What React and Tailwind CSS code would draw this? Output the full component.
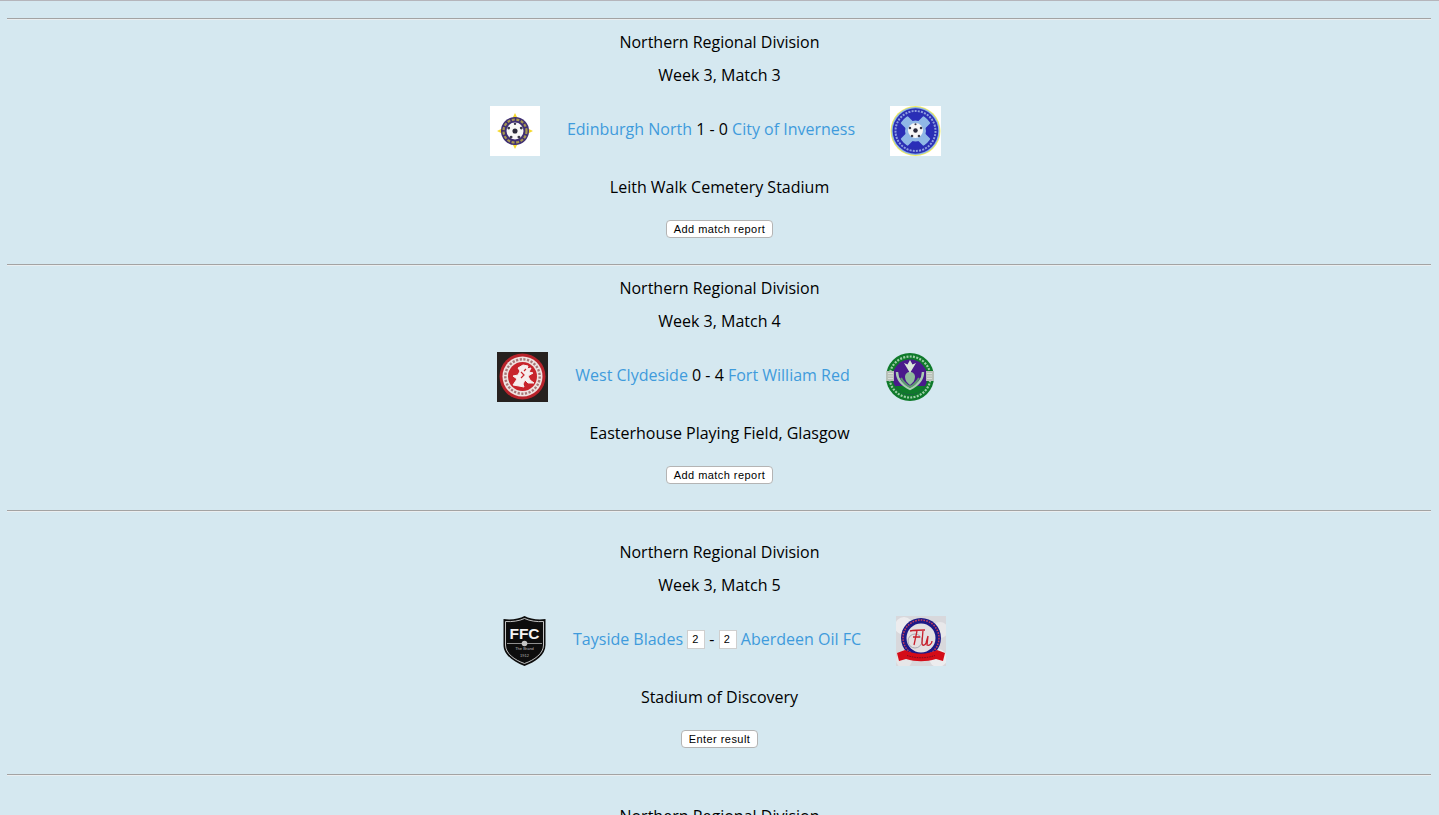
import React from "react";

function Ball({ cx, cy, r }) {
  return (
    <g>
      <circle cx={cx} cy={cy} r={r} fill="#f7f7f7" />
      <circle cx={cx} cy={cy} r={r * 0.3} fill="#2a2a3a" />
      <circle cx={cx - r * 0.74} cy={cy - r * 0.34} r={r * 0.17} fill="#3a3a4a" />
      <circle cx={cx + r * 0.74} cy={cy - r * 0.34} r={r * 0.17} fill="#3a3a4a" />
      <circle cx={cx - r * 0.46} cy={cy + r * 0.72} r={r * 0.17} fill="#3a3a4a" />
      <circle cx={cx + r * 0.46} cy={cy + r * 0.72} r={r * 0.17} fill="#3a3a4a" />
      <circle cx={cx} cy={cy - r * 0.84} r={r * 0.14} fill="#3a3a4a" />
    </g>
  );
}

function EdinburghLogo() {
  return (
    <svg width="50" height="50" viewBox="0 0 50 50" className="block">
      <rect width="50" height="50" fill="#fff" />
      <path d="M25 7l3.500 7h-7zM25 43l3.500-7h-7zM7 25l7-3.500v7zM43 25l-7-3.500v7z" fill="#f5d92e" />
      <circle cx="25" cy="25" r="14" fill="#3f2f72" />
      <circle cx="25" cy="25" r="11.5" fill="none" stroke="#a8994f" strokeWidth="2.2" strokeDasharray="3 1.6" />
      <Ball cx={25} cy={25} r={8.5} />
    </svg>
  );
}

function InvernessLogo() {
  return (
    <svg width="51" height="50" viewBox="0 0 51 50" className="block">
      <rect width="51" height="50" fill="#fff" />
      <circle cx="25.5" cy="25" r="25" fill="#f2ee5c" />
      <circle cx="25.5" cy="25" r="24" fill="#8fb6e4" />
      <circle cx="25.5" cy="25" r="22.8" fill="#2b2fb4" />
      <circle cx="25.5" cy="25" r="20" fill="none" stroke="#8f9fe0" strokeWidth="2" strokeDasharray="2 1.2" />
      <circle cx="25.5" cy="25" r="17.5" fill="#2a2eb8" />
      <path d="M13.500 13l24 24M37.500 13l-24 24" stroke="#90b8e6" strokeWidth="10" />
      <circle cx="25.5" cy="25" r="17.500" fill="none" stroke="#2b2fb4" strokeWidth="1.500" />
      <circle cx="25.5" cy="25" r="10.500" fill="#90b8e6" />
      <Ball cx={25.5} cy={24.5} r={7.5} />
    </svg>
  );
}

function ClydesideLogo() {
  return (
    <svg width="51" height="50" viewBox="0 0 51 50" className="block">
      <rect width="51" height="50" fill="#26211f" />
      <circle cx="25.5" cy="24.5" r="23" fill="#b8232b" />
      <circle cx="25.5" cy="24.5" r="20" fill="#efe3e1" />
      <circle cx="25.5" cy="24.5" r="17.2" fill="none" stroke="#a87878" strokeWidth="2.400" strokeDasharray="2.200 1.500" />
      <circle cx="25.5" cy="24.5" r="14.5" fill="#c8242c" />
      <path
        d="M16 33l4-6-4-3 5-1 2-4-2-3 5-3 5 1-1 3 4-1-2 4 4 1-5 3 2 4 4 3-6 0-3-3-2 4 1 3-5-1z"
        fill="#f6eeee"
        stroke="#f6eeee"
        strokeLinejoin="round"
      />
      <path d="M24 20l3 3-3 3M29 17l-2 2" fill="none" stroke="#c8242c" strokeWidth="1.200" />
    </svg>
  );
}

function FortWilliamLogo() {
  return (
    <svg width="50" height="50" viewBox="0 0 50 50" className="block">
      <circle cx="25" cy="25" r="24" fill="#0f7a2b" />
      <circle cx="25" cy="25" r="20.5" fill="none" stroke="#9fcfa8" strokeWidth="2.200" strokeDasharray="2 1.300" />
      <circle cx="25" cy="25" r="17.500" fill="#4a1a8c" />
      <path d="M10 34a17.500 17.500 0 0 0 30 0z" fill="#0f7a2b" />
      <path d="M1 19h8v10H1zM41 19h8v10h-8z" fill="#b8c0b8" />
      <path d="M3 21.500h5M3 24h5M3 26.500h5M42 21.500h5M42 24h5M42 26.500h5" stroke="#dfe4df" strokeWidth="0.800" />
      <path d="M12 20c0 7 5 13 13 17 8-4 13-10 13-17" fill="none" stroke="#a9cdb2" strokeWidth="2.400" />
      <path d="M16 26c2 4 5 7 9 9 4-2 7-5 9-9" fill="none" stroke="#5f9a70" strokeWidth="2" />
      <path d="M20 25c0-3 2-5 5-5s5 2 5 5c0 3-2 6-5 8-3-2-5-5-5-8z" fill="#8fbd9b" />
      <path d="M25 21l-6-10 3.500 1.500L25 8l2.500 4.500L31 11z" fill="#dbe8db" />
    </svg>
  );
}

function FfcLogo() {
  return (
    <svg width="43" height="50" viewBox="0 0 43 50" className="block">
      <path d="M21.5 0C16 3 8 4 .5 3v26c0 10 10 17 21 21C32.500 46 42.500 39 42.500 29V3c-7.500 1-15.500 0-21-3z" fill="#0d0d0d" />
      <path d="M21.5 2.500C16 5 9 6 2.500 5.500V29c0 8.500 9 15 19 18.500C31.500 44 40.500 37.500 40.500 29V5.500c-6.500 .5-13.500-.5-19-3z" fill="none" stroke="#d8d8d8" strokeWidth="0.900" />
      <text x="21.500" y="23" textAnchor="middle" fontFamily="'Liberation Sans', sans-serif" fontWeight="700" fontSize="15.500" fill="#f4f4f4">
        FFC
      </text>
      <path d="M4 27.500h35" stroke="#8f8f8f" strokeWidth="1" />
      <circle cx="21.500" cy="27.500" r="2.800" fill="#c4c4c4" />
      <text x="21.500" y="34" textAnchor="middle" fontFamily="'Liberation Sans', sans-serif" fontSize="4" fill="#b8b8b8">
        The Brand
      </text>
      <text x="21.500" y="41" textAnchor="middle" fontFamily="'Liberation Sans', sans-serif" fontSize="4" fill="#b8b8b8">
        1912
      </text>
    </svg>
  );
}

function AberdeenLogo() {
  return (
    <svg width="50" height="50" viewBox="0 0 50 50" className="block">
      <rect width="50" height="50" fill="#d8d8dc" />
      <circle cx="8" cy="10" r="9" fill="#ececee" />
      <circle cx="44" cy="14" r="8" fill="#e8e8ea" />
      <circle cx="42" cy="42" r="9" fill="#ececee" />
      <circle cx="8" cy="44" r="8" fill="#e6e6e8" />
      <circle cx="25" cy="22" r="20" fill="#1d1a86" />
      <circle cx="25" cy="22" r="18" fill="none" stroke="#c8405c" strokeWidth="1.500" strokeDasharray="1.600 1.200" />
      <circle cx="25" cy="22" r="14.500" fill="#e4e0e2" />
      <circle cx="19" cy="25" r="7" fill="none" stroke="#a8a8b0" strokeWidth="1" />
      <path d="M14 15c5-1 10-1 15-1M21 15l-3 14M17 21h7M27 14l-1 13c0 3 3 3 4 0l2-7M32 20l-1 9c2 1 5-1 5-4" fill="none" stroke="#c8202c" strokeWidth="1.300" />
      <path d="M1 37l8-3c10 5 22 5 32 0l8 3-2 8-7-2c-10 3-20 3-30 0l-7 2z" fill="#d40c18" />
      <path d="M11 39.500c9 3 19 3 28 0" fill="none" stroke="#7c0a22" strokeWidth="1" strokeDasharray="1.500 1" />
    </svg>
  );
}

function Match({ pad, rowClass, week, home, away, venue, homeLogo, awayLogo, score, button }) {
  return (
    <>
      <hr className="ml-[7px] mr-[8px] border-0 border-t border-b border-t-[#a3a3a3] border-b-[#eaeef0]" />
      <div className={`flex flex-col items-center ${pad}`}>
        <p className="leading-[22px]">Northern Regional Division</p>
        <p className="mt-[11px] leading-[22px]">Week 3, Match {week}</p>
        <div className={`mt-[20px] flex w-full items-center justify-center ${rowClass}`}>
          {homeLogo}
          <div className="mb-[4px] ml-[27px] mr-[35px] flex items-center leading-[22px] whitespace-pre">
            <a href="#" className="text-[#3f9bdc]">{home}</a>
            {score}
            <a href="#" className="text-[#3f9bdc]">{away}</a>
          </div>
          {awayLogo}
        </div>
        <p className="mt-[20px] leading-[22px]">{venue}</p>
        <button className="mt-[22px] mb-[26px] h-[18px] rounded-[4px] border border-[#b4b4b4] bg-white px-[7px] font-['Liberation_Sans',sans-serif] text-[11px] leading-[16px] tracking-[0.45px] text-black">
          {button}
        </button>
      </div>
    </>
  );
}

function ScoreInput({ value }) {
  return (
    <input
      readOnly
      value={value}
      className="h-[19px] w-[18px] border border-[#cfcfcf] bg-white pl-[4px] font-['Liberation_Sans',sans-serif] text-[11px] text-black"
    />
  );
}

export default function App() {
  return (
    <div className="h-screen overflow-hidden border-t border-t-[#b5b5bb] bg-[#d5e8f0] pt-[17px] font-['Open_Sans',sans-serif] text-base text-black">
      <Match
        pad="pt-[11px]"
        rowClass="pr-[8px]"
        week={3}
        home="Edinburgh North"
        away="City of Inverness"
        venue="Leith Walk Cemetery Stadium"
        homeLogo={<EdinburghLogo />}
        awayLogo={<InvernessLogo />}
        score={<span> 1 - 0 </span>}
        button="Add match report"
      />
      <Match
        pad="pt-[11px]"
        rowClass="pr-[7px]"
        week={4}
        home="West Clydeside"
        away="Fort William Red"
        venue="Easterhouse Playing Field, Glasgow"
        homeLogo={<ClydesideLogo />}
        awayLogo={<FortWilliamLogo />}
        score={<span> 0 - 4 </span>}
        button="Add match report"
      />
      <Match
        pad="pt-[29px]"
        rowClass="pl-[10px]"
        week={5}
        home="Tayside Blades"
        away="Aberdeen Oil FC"
        venue="Stadium of Discovery"
        homeLogo={<FfcLogo />}
        awayLogo={<AberdeenLogo />}
        score={
          <span className="flex items-center">
            <span> </span>
            <ScoreInput value="2" />
            <span> - </span>
            <ScoreInput value="2" />
            <span> </span>
          </span>
        }
        button="Enter result"
      />
      <hr className="ml-[7px] mr-[8px] border-0 border-t border-b border-t-[#a3a3a3] border-b-[#eaeef0]" />
      <div className="flex flex-col items-center pt-[29px]">
        <p className="leading-[22px]">Northern Regional Division</p>
      </div>
    </div>
  );
}
